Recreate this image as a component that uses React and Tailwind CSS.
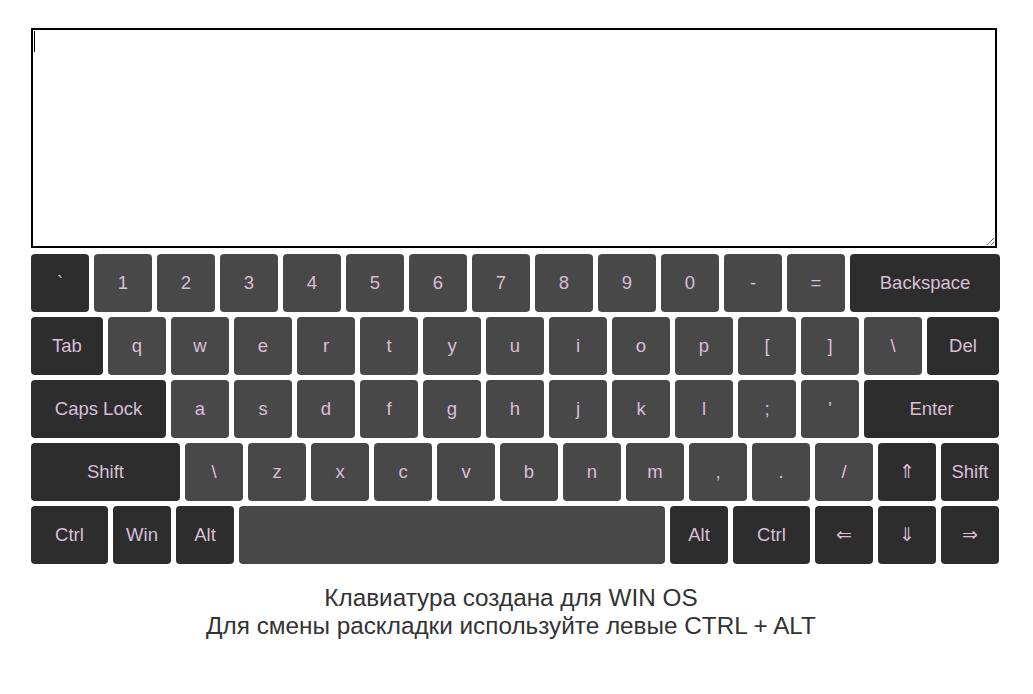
import React from "react";

const D = "bg-[#2d2d2d]";
const L = "bg-[#484848]";

const rows = [
  [
    ["`", 58, D], ["1", 58, L], ["2", 58, L], ["3", 58, L], ["4", 58, L], ["5", 58, L], ["6", 58, L],
    ["7", 58, L], ["8", 58, L], ["9", 58, L], ["0", 58, L], ["-", 58, L], ["=", 58, L], ["Backspace", 150, D],
  ],
  [
    ["Tab", 72, D], ["q", 58, L], ["w", 58, L], ["e", 58, L], ["r", 58, L], ["t", 58, L], ["y", 58, L],
    ["u", 58, L], ["i", 58, L], ["o", 58, L], ["p", 58, L], ["[", 58, L], ["]", 58, L], ["\\", 58, L], ["Del", 72, D],
  ],
  [
    ["Caps Lock", 135, D], ["a", 58, L], ["s", 58, L], ["d", 58, L], ["f", 58, L], ["g", 58, L], ["h", 58, L],
    ["j", 58, L], ["k", 58, L], ["l", 58, L], [";", 58, L], ["'", 58, L], ["Enter", 135, D],
  ],
  [
    ["Shift", 149, D], ["\\", 58, L], ["z", 58, L], ["x", 58, L], ["c", 58, L], ["v", 58, L], ["b", 58, L],
    ["n", 58, L], ["m", 58, L], [",", 58, L], [".", 58, L], ["/", 58, L], ["⇑", 58, D], ["Shift", 58, D],
  ],
  [
    ["Ctrl", 77, D], ["Win", 58, D], ["Alt", 58, D], ["", 426, L], ["Alt", 58, D], ["Ctrl", 77, D],
    ["⇐", 58, D], ["⇓", 58, D], ["⇒", 58, D],
  ],
];

export default function App() {
  return (
    <div className="w-[1033px] h-[694px] bg-white pl-[31px] pt-[28px]" style={{ fontFamily: '"Liberation Sans", Arial, sans-serif' }}>
      <div className="relative w-[966px]">
        <textarea
          className="block w-[966px] h-[220px] border-2 border-black bg-white outline-none text-[18px] px-[1px] py-[1px]"
        />
        <div className="absolute left-[3px] top-[3px] w-[1px] h-[21px] bg-black pointer-events-none" />
      </div>
      <div className="flex flex-col gap-[5px] mt-[6px] w-[968px]">
        {rows.map((row, i) => (
          <div key={i} className="flex gap-[5px] h-[58px]">
            {row.map(([label, w, bg], j) => (
              <div
                key={j}
                style={{ width: w }}
                className={`${bg} rounded-[4px] flex items-center justify-center text-[#d8bfd8] text-[18.5px] shrink-0`}
              >
                {label}
              </div>
            ))}
          </div>
        ))}
      </div>
      <div className="w-[960px] mt-[20px] text-center text-[24.3px] leading-[28px] text-[#333333]">
        <div>Клавиатура создана для WIN OS</div>
        <div>Для смены раскладки используйте левые CTRL + ALT</div>
      </div>
    </div>
  );
}
